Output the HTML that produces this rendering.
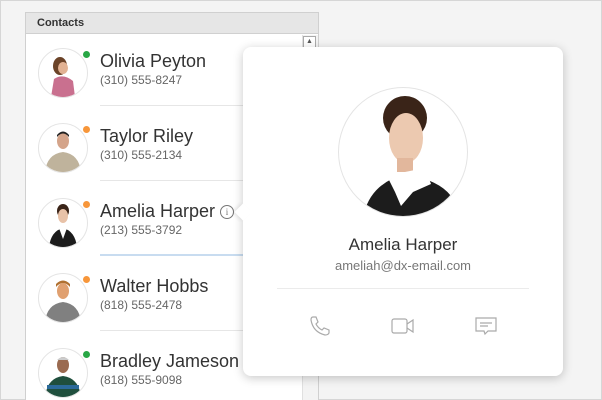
<!DOCTYPE html><html style="overflow:hidden;height:400px"><head><style>
body{margin:0;width:602px;height:400px;background:#f4f4f4;font-family:"Liberation Sans",sans-serif;position:relative;overflow:hidden}
.frame{position:absolute;left:0;top:0;width:600px;height:398px;border:1px solid #d6d6d6}
.panel{position:absolute;left:25px;top:12px;width:292px;height:388px;background:#fff;border:1px solid #d0d0d0;border-bottom:none;overflow:hidden}
.hdr{height:20px;background:#e6e6e6;border-bottom:1px solid #d0d0d0;font-weight:bold;font-size:11px;color:#333;line-height:20px;padding-left:11px}
.sb{position:absolute;left:276px;top:22px;width:15px;height:380px;background:#f3f3f3;border-left:1px solid #e0e0e0}
.sbb{position:absolute;left:277px;top:23px;width:11px;height:11px;border:1px solid #aaa;background:#fff;font-size:7px;text-align:center;line-height:10px;color:#555}
.row{position:absolute;left:0;width:276px;height:75px}
.av{position:absolute;left:12px;top:9px;width:48px;height:48px;border-radius:50%;border:1px solid #e4e4e4;overflow:hidden;background:#fff}
.dot{position:absolute;left:57px;top:12px;width:7px;height:7px;border-radius:50%}
.nm{position:absolute;left:74px;top:12px;font-size:18px;color:#333}
.ph{position:absolute;left:74px;top:34px;font-size:12px;color:#666}
.sep{position:absolute;left:74px;top:66px;width:210px;height:1px;background:#e6e6e6}
.pop{position:absolute;left:243px;top:47px;width:320px;height:329px;background:#fff;border-radius:8px;box-shadow:0 2px 10px rgba(0,0,0,.22)}
.arr{position:absolute;left:-6px;top:159px;width:12px;height:12px;background:#fff;transform:rotate(45deg);box-shadow:-2px 2px 3px rgba(0,0,0,.08)}
</style></head><body><div class="frame"></div>
<div class="panel"><div class="hdr">Contacts</div>
<div class="sb"></div><div class="sbb">▲</div>

<div class="row" style="top:26px"><div class="av"><svg width="48" height="48"><ellipse cx="21" cy="17" rx="7" ry="9" fill="#6b4328"/><ellipse cx="24" cy="19" rx="5" ry="6" fill="#e2b293"/><path d="M12 48 L15 30 Q24 24 34 32 L36 48Z" fill="#c9708f"/></svg></div><div class="dot" style="background:#28a745"></div><div class="nm">Olivia Peyton</div><div class="ph">(310) 555-8247</div><div class="sep"></div></div>

<div class="row" style="top:101px"><div class="av"><svg width="48" height="48"><ellipse cx="24" cy="17" rx="6" ry="8" fill="#d4a48a"/><path d="M18 13 Q24 6 30 13 L30 11 Q24 4 18 11Z" fill="#222"/><path d="M6 48 Q8 30 24 28 Q40 30 42 48Z" fill="#bfb39c"/></svg></div><div class="dot" style="background:#f7963a"></div><div class="nm">Taylor Riley</div><div class="ph">(310) 555-2134</div><div class="sep"></div></div>

<div class="row" style="top:176px"><div class="av"><svg width="48" height="48"><ellipse cx="24" cy="12" rx="6" ry="7" fill="#3a2418"/><ellipse cx="24" cy="17" rx="5" ry="7" fill="#e8c2a8"/><path d="M10 48 Q12 32 24 29 Q36 32 38 48Z" fill="#1c1c1c"/><path d="M20 29 L24 40 L28 29Z" fill="#fff"/></svg></div><div class="dot" style="background:#f7963a"></div><div class="nm">Amelia Harper <span style="display:inline-block;width:12px;height:12px;border:1px solid #777;border-radius:50%;font-size:9px;line-height:12px;text-align:center;color:#777;vertical-align:2px;font-family:'Liberation Serif',serif">i</span></div><div class="ph">(213) 555-3792</div><div class="sep" style="background:#c8dcf0;height:2px;top:65px"></div></div>

<div class="row" style="top:251px"><div class="av"><svg width="48" height="48"><ellipse cx="24" cy="17" rx="6" ry="8" fill="#e0a070"/><path d="M17 13 Q24 5 31 13 L31 10 Q24 3 17 10Z" fill="#b07030"/><path d="M6 48 Q8 30 24 28 Q40 30 42 48Z" fill="#808080"/></svg></div><div class="dot" style="background:#f7963a"></div><div class="nm">Walter Hobbs</div><div class="ph">(818) 555-2478</div><div class="sep"></div></div>

<div class="row" style="top:326px"><div class="av"><svg width="48" height="48"><ellipse cx="24" cy="16" rx="6" ry="8" fill="#9a6a50"/><path d="M18 11 Q24 5 30 11" fill="#ccc"/><path d="M6 48 Q8 29 24 27 Q40 29 42 48Z" fill="#1f4f3d"/><rect x="8" y="36" width="32" height="4" fill="#2b6a9a"/></svg></div><div class="dot" style="background:#28a745"></div><div class="nm">Bradley Jameson</div><div class="ph">(818) 555-9098</div></div>
</div>

<div class="pop"><div class="arr"></div>
<div style="position:absolute;left:95px;top:40px;width:128px;height:128px;border-radius:50%;border:1px solid #e4e4e4;overflow:hidden;background:#fff"><svg width="128" height="128"><ellipse cx="66" cy="30" rx="22" ry="22" fill="#3a2418"/><ellipse cx="67" cy="50" rx="17" ry="25" fill="#ecc9b0"/><rect x="58" y="70" width="16" height="14" fill="#e2b79c"/><path d="M24 130 Q30 96 66 86 Q100 92 112 108 L112 130Z" fill="#1c1c1c"/><path d="M50 92 L66 84 L86 80 L92 96 L74 104 L62 118 L56 104Z" fill="#fff"/></svg></div>
<div style="position:absolute;top:188px;width:100%;text-align:center;font-size:17px;color:#333">Amelia Harper</div>
<div style="position:absolute;top:211px;width:100%;text-align:center;font-size:13px;color:#777">ameliah@dx-email.com</div>
<div style="position:absolute;left:34px;top:241px;width:252px;height:1px;background:#ebebeb"></div>
<svg style="position:absolute;left:66px;top:268px" width="22" height="22" viewBox="0 0 22 22"><path d="M4 2 L7 2 L9 7 L7 9 Q9 13 13 15 L15 13 L20 15 L20 18 Q19 20 16 20 Q4 17 2 5 Q2 2 4 2Z" fill="none" stroke="#aaa" stroke-width="1.2"/></svg>
<svg style="position:absolute;left:148px;top:270px" width="24" height="18" viewBox="0 0 24 18"><rect x="1" y="2" width="15" height="14" rx="2" fill="none" stroke="#aaa" stroke-width="1.2"/><path d="M16 7 L22 3 L22 15 L16 11" fill="none" stroke="#aaa" stroke-width="1.2"/></svg>
<svg style="position:absolute;left:231px;top:270px" width="24" height="20" viewBox="0 0 24 20"><path d="M2 1 H22 V14 H14 L11 17 L10 14 H2Z" fill="none" stroke="#aaa" stroke-width="1.2"/><path d="M6 6 H18 M6 9 H14" stroke="#aaa" stroke-width="1.2"/></svg>
</div>
</body></html>
